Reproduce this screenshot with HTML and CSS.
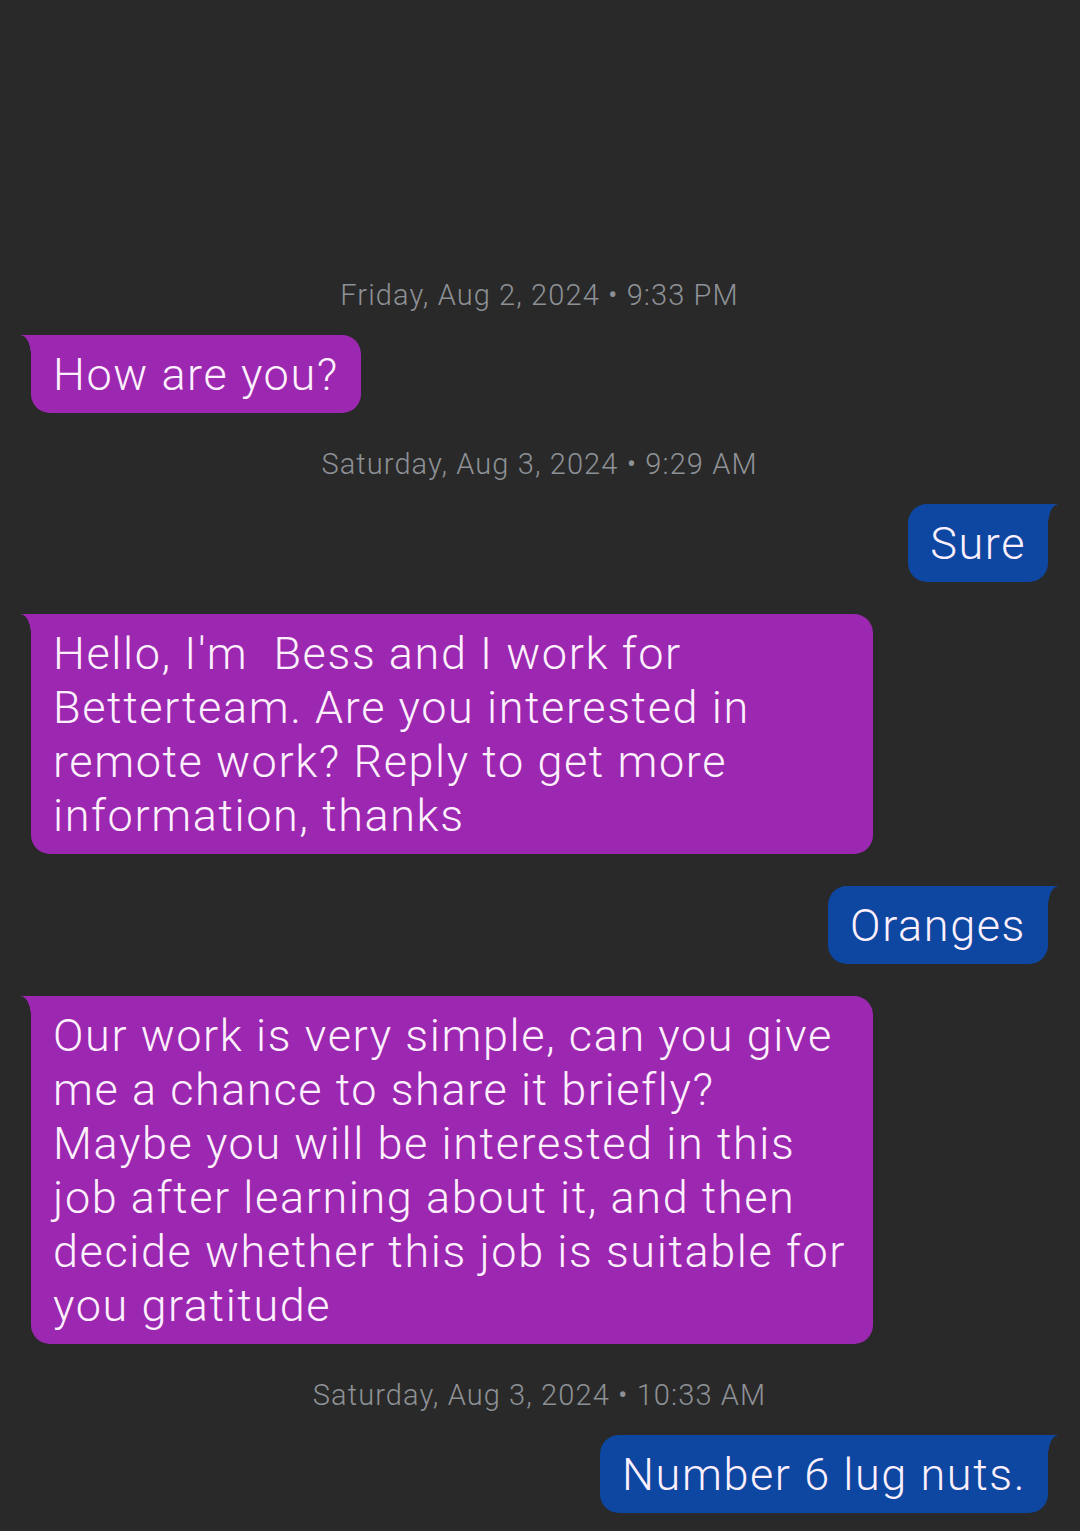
FILE: index.html
```html
<!DOCTYPE html>
<html lang="en">
<head>
<meta charset="utf-8">
<title>Messages</title>
<link rel="stylesheet" href="styles.css">
</head>
<body>
<main class="thread">
  <div class="stamp">Friday, Aug 2, 2024 • 9:33 PM</div>
  <div class="bubble in">How are you?</div>
  <div class="stamp">Saturday, Aug 3, 2024 • 9:29 AM</div>
  <div class="bubble out">Sure</div>
  <div class="bubble in wide">Hello, I'm&nbsp; Bess and I work for<br>Betterteam. Are you interested in<br>remote work? Reply to get more<br>information, thanks</div>
  <div class="bubble out">Oranges</div>
  <div class="bubble in wide">Our work is very simple, can you give<br>me a chance to share it briefly?<br>Maybe you will be interested in this<br>job after learning about it, and then<br>decide whether this job is suitable for<br>you gratitude</div>
  <div class="stamp">Saturday, Aug 3, 2024 • 10:33 AM</div>
  <div class="bubble out">Number 6 lug nuts.</div>
</main>
</body>
</html>
```
FILE: styles.css
```css
html, body {
  margin: 0;
  padding: 0;
  background: #292929;
}
body {
  width: 1080px;
  height: 1531px;
  overflow: hidden;
  font-family: Roboto, "Noto Sans", sans-serif;
}
.thread {
  display: flex;
  flex-direction: column;
  padding: 275px 32px 0 31px;
}
.stamp {
  align-self: center;
  font-size: 29px;
  font-weight: 300;
  letter-spacing: 1.1px;
  line-height: 40px;
  color: #8e9196;
  margin: 0 0 20px;
}
.bubble + .stamp {
  margin-top: 31px;
}
.bubble {
  position: relative;
  box-sizing: border-box;
  font-size: 45px;
  font-weight: 300;
  letter-spacing: 1.6px;
  line-height: 54px;
  color: #fdf0fd;
  padding: 13px 22px 11px;
  border-radius: 19px;
  white-space: nowrap;
  max-width: 842px;
}
.bubble + .bubble {
  margin-top: 32px;
}
.bubble::before {
  content: "";
  position: absolute;
  top: 0;
  width: 10px;
  height: 20px;
}
.in {
  align-self: flex-start;
  background: #9c27b0;
  border-top-left-radius: 0;
}
.in::before {
  left: -10px;
  background: radial-gradient(ellipse 10px 20px at 0 100%, transparent 96%, #9c27b0 100%);
}
.out {
  align-self: flex-end;
  background: #0d47a1;
  border-top-right-radius: 0;
}
.out::before {
  right: -10px;
  background: radial-gradient(ellipse 10px 20px at 100% 100%, transparent 96%, #0d47a1 100%);
}
.wide {
  width: 842px;
}
```
